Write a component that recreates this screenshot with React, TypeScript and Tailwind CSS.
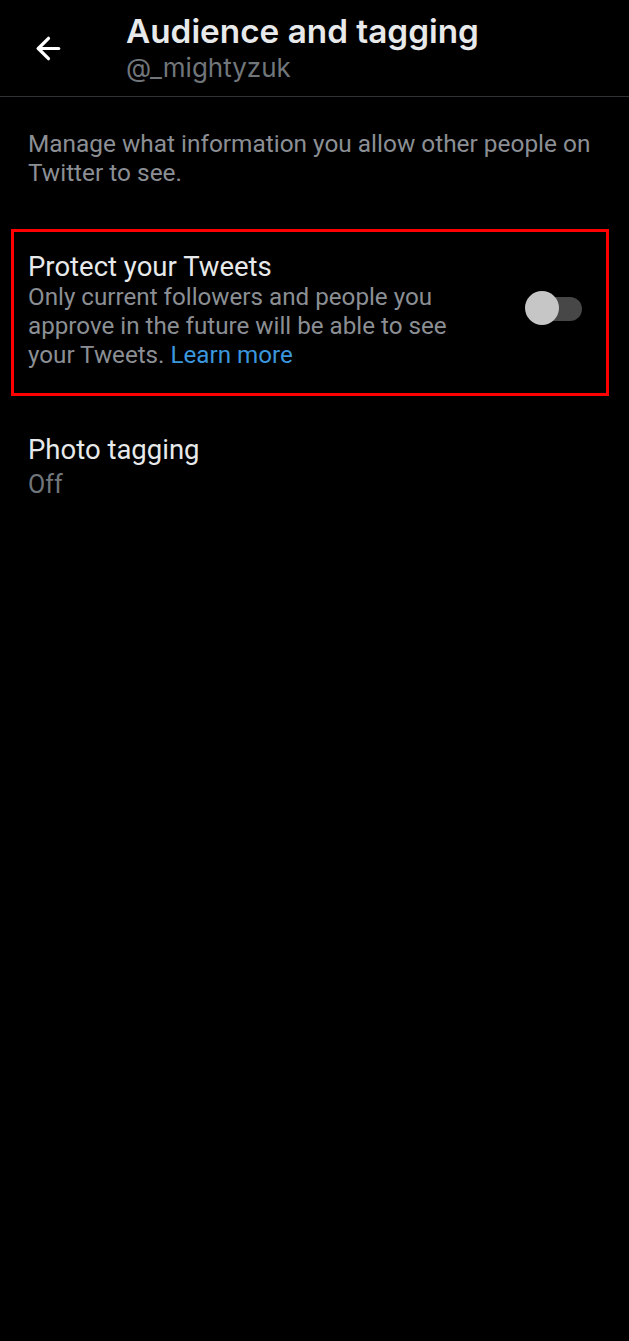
import { ArrowLeft } from "lucide-react"

export default function App() {
  return (
    <div className="min-h-[1341px] w-full bg-black text-[#e7e9ea]" style={{ fontFamily: "Roboto, 'Liberation Sans', sans-serif" }}>
      {/* Header */}
      <div className="flex items-start border-b border-[#2f3336] h-[97px]">
        <div className="w-[126px] shrink-0 pl-[31px] pt-[31px]">
          <ArrowLeft className="w-[35px] h-[35px] text-white" strokeWidth={2.2} />
        </div>
        <div className="pt-[10px]">
          <div className="text-[33.3px] leading-[42px] font-semibold text-[#e7e9ea]" style={{ fontFamily: "Inter, sans-serif" }}>
            Audience and tagging
          </div>
          <div className="text-[26px] leading-[32px] text-[#71767b]" style={{ fontFamily: "Inter, sans-serif" }}>
            @_mightyzuk
          </div>
        </div>
      </div>

      {/* Intro */}
      <p className="px-[28px] pt-[32px] text-[24.4px] leading-[29px] text-[#8b8f94]">
        Manage what information you allow other people on Twitter to see.
      </p>

      {/* Protect tweets */}
      <div className="ml-[11px] mr-[20px] mt-[42px] border-[3px] border-[#ff0000] h-[167px] flex items-center pl-[14px] pr-[23px]">
        <div className="flex-1 -mt-[4px]">
          <div className="text-[27.5px] leading-[32px] text-[#e7e9ea]">Protect your Tweets</div>
          <div className="text-[24.2px] leading-[29px] text-[#8b8f94] max-w-[460px]">
            Only current followers and people you approve in the future will be able to see your Tweets.{" "}
            <span className="text-[#3b97dd]">Learn more</span>
          </div>
        </div>
        <div className="relative w-[58px] h-[36px] shrink-0 -mt-[8px] flex items-center">
          <div className="ml-[4px] w-[53px] h-[24px] rounded-full bg-[#474747]" />
          <div className="absolute left-0 top-0 w-[34px] h-[34px] rounded-full bg-[#c6c6c6]" />
        </div>
      </div>

      {/* Photo tagging */}
      <div className="px-[28px] pt-[36px]">
        <div className="text-[27.5px] leading-[36px] text-[#e7e9ea]">Photo tagging</div>
        <div className="text-[25px] leading-[34px] text-[#71767b]">Off</div>
      </div>
    </div>
  )
}
